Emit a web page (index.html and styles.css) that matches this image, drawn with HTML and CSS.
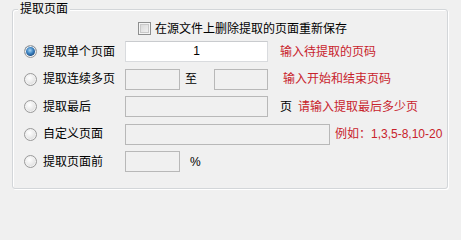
FILE: index.html
```html
<!DOCTYPE html>
<html lang="zh-CN">
<head>
<meta charset="utf-8">
<title>提取页面</title>
<link rel="stylesheet" href="styles.css">
</head>
<body>
<div class="group">
  <div class="legend">提取页面</div>
  <div class="check-row">
    <span class="checkbox"></span>
    <span class="text">在源文件上删除提取的页面重新保存</span>
  </div>
  <div class="rows">
    <div class="row">
      <span class="radio on"></span>
      <span class="label">提取单个页面</span>
      <span class="input enabled w-long">1</span>
      <span class="hint gap-12">输入待提取的页码</span>
    </div>
    <div class="row">
      <span class="radio"></span>
      <span class="label">提取连续多页</span>
      <span class="input w-short"></span>
      <span class="to">至</span>
      <span class="input w-short2"></span>
      <span class="hint gap-15">输入开始和结束页码</span>
    </div>
    <div class="row">
      <span class="radio"></span>
      <span class="label">提取最后</span>
      <span class="input w-long"></span>
      <span class="unit">页</span>
      <span class="hint gap-6">请输入提取最后多少页</span>
    </div>
    <div class="row">
      <span class="radio"></span>
      <span class="label">自定义页面</span>
      <span class="input w-wide"></span>
      <span class="hint gap-5">例如：1,3,5-8,10-20</span>
    </div>
    <div class="row">
      <span class="radio"></span>
      <span class="label">提取页面前</span>
      <span class="input w-short"></span>
      <span class="pct">%</span>
    </div>
  </div>
</div>
</body>
</html>
```
FILE: styles.css
```css
html, body {
  margin: 0;
  padding: 0;
}
body {
  width: 461px;
  height: 201px;
  background: #f0f0f0;
  font-family: "Liberation Sans", "Noto Sans CJK SC", sans-serif;
  font-size: 12px;
  line-height: 14px;
  color: #000;
  overflow: hidden;
  padding-top: 9px;
  box-sizing: border-box;
}
.group {
  position: relative;
  box-sizing: border-box;
  margin-left: 12px;
  width: 436px;
  height: 180px;
  border: 1px solid #d3d6d9;
  border-radius: 3px;
  box-shadow: inset 1px 1px 0 #fff, 1px 1px 0 #fff;
  padding: 12px 0 0 11px;
}
.legend {
  position: absolute;
  top: -8px;
  left: 5px;
  padding: 0 2px;
  background: #f0f0f0;
  line-height: 14px;
}
.check-row {
  display: flex;
  align-items: center;
  height: 13px;
  margin-left: 114px;
}
.checkbox {
  flex: none;
  box-sizing: border-box;
  width: 13px;
  height: 13px;
  border: 1px solid #8e8f8f;
  background: linear-gradient(135deg, #d4d4d4, #f6f6f6);
  box-shadow: inset 0 0 0 1px #f4f4f4, inset 0 0 0 2px #c9c9c9;
  margin-right: 4px;
}
.rows {
  display: flex;
  flex-direction: column;
  gap: 6.5px;
  margin-top: 6px;
}
.row {
  display: flex;
  align-items: center;
  height: 21px;
}
.radio {
  flex: none;
  box-sizing: border-box;
  width: 13px;
  height: 13px;
  border-radius: 50%;
  border: 1px solid #9a9a9a;
  background: radial-gradient(circle at 40% 35%, #ffffff 0, #ececec 45%, #cfcfcf 100%);
  box-shadow: inset 0 0 0 1px #f2f2f2;
  margin-right: 6px;
}
.radio.on {
  background:
    radial-gradient(circle at 45% 40%, #a9d4f2 0, #3f86c4 35%, #1e4f86 62%, transparent 66%),
    radial-gradient(circle at 40% 35%, #ffffff 0, #e6e6e6 60%, #cdcdcd 100%);
}
.label {
  flex: none;
  width: 82px;
}
.input {
  flex: none;
  box-sizing: border-box;
  height: 21px;
  border: 1px solid #b8b8b8;
  background: #f0f0f0;
  text-align: center;
  line-height: 19px;
}
.input.enabled {
  background: #fff;
  border-color: #d9dbde;
  border-top-color: #c9cbce;
}
.w-long { width: 143px; }
.w-short { width: 55px; }
.w-short2 { width: 54px; }
.w-wide { width: 205px; }
.to {
  flex: none;
  width: 12px;
  margin-left: 5px;
  margin-right: 17px;
}
.unit {
  flex: none;
  margin-left: 12px;
}
.pct {
  margin-left: 10px;
}
.hint {
  color: #c8232c;
  white-space: nowrap;
}
.gap-12 { margin-left: 12px; }
.gap-15 { margin-left: 15px; }
.gap-6 { margin-left: 6px; }
.gap-5 { margin-left: 5px; }
```
